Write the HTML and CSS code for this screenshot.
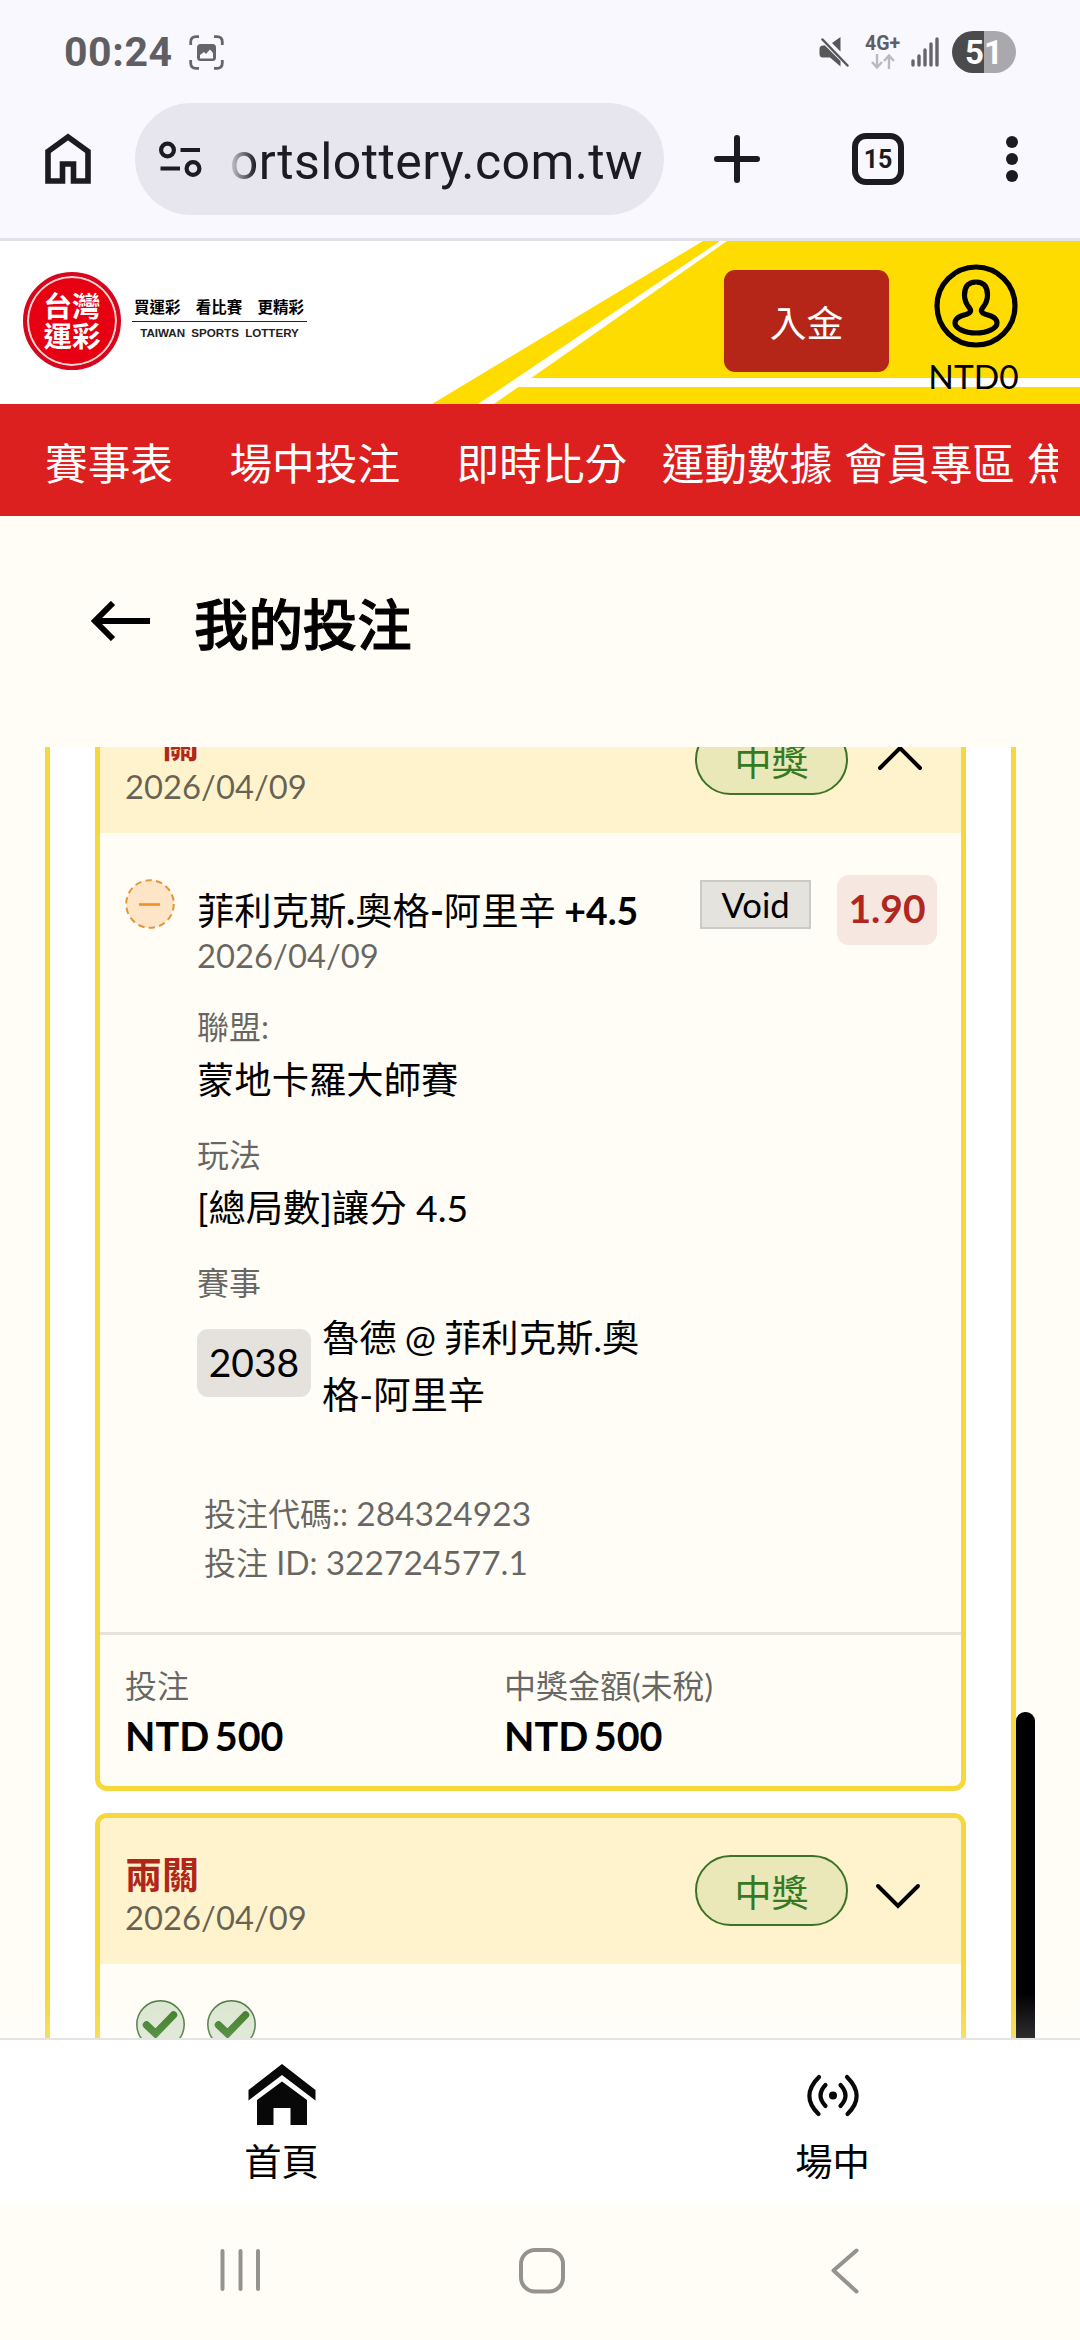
FILE: index.html
```html
<!DOCTYPE html>
<html lang="zh-Hant">
  <head>
    <meta charset="UTF-8" />
    <meta name="viewport" content="width=device-width, initial-scale=1.0" />
    <title>我的投注</title>
    <link rel="stylesheet" href="styles.css">
  </head>
  <body>
    <div class="status-bar">
      <span class="clock">00:24</span>
      <svg class="capture-icon" width="35" height="35" viewBox="0 0 35 35">
        <path d="M1.7 10V7Q1.7 1.7 7 1.7H10M25 1.7H28Q33.3 1.7 33.3 7V10M33.3 25V28Q33.3 33.3 28 33.3H25M10 33.3H7Q1.7 33.3 1.7 28V25" fill="none" stroke="#66666a" stroke-width="2.8" />
        <rect x="8" y="9" width="19" height="17" rx="3.5" fill="#66666a" />
        <path d="M11 20l4-3 2 2 4-4.500 3 3.500V23.500H11z" fill="#f9f8ff" />
      </svg>
      <svg class="mute-icon" width="30" height="32" viewBox="0 0 30 32">
        <path d="M0.500 13Q0.500 9.500 4 9.500H6L21.500 25V30.500L11 21.500H4Q0.500 21.500 0.500 18zM13 7L21.500 1V15.500z" fill="#58585b" />
        <path d="M3.500 3.500L28.500 29.500" stroke="#58585b" stroke-width="2.500" stroke-linecap="round" />
      </svg>
      <div class="network">
        <span>4G+</span>
        <svg width="24" height="15" viewBox="0 0 24 15">
          <path d="M6 0V13M1 8L6 13.500L11 8M18 15V2M13 7L18 1.500L23 7" fill="none" stroke="#b9b9be" stroke-width="2.400" />
        </svg>
      </div>
      <svg class="signal-icon" width="28" height="30" viewBox="0 0 28 30">
        <path d="M2 24V28M8 19V28M14 13V28M20 7V28M26 2V28" stroke="#66666a" stroke-width="3.400" stroke-linecap="round" />
      </svg>
      <div class="battery">51</div>
    </div>

    <div class="browser-bar">
      <svg class="home-icon" width="46" height="52" viewBox="0 0 46 52">
        <path d="M3 18.500L23 4L43 18.500V48H28.500V31H17.500V48H3z" fill="none" stroke="#1b1b21" stroke-width="5.600" />
      </svg>
      <div class="url-bar">
        <svg width="43" height="38" viewBox="0 0 43 38">
          <g fill="none" stroke="#1b1b21" stroke-width="4.200">
            <circle cx="8.500" cy="10" r="6.400" />
            <circle cx="34" cy="28.500" r="6.400" />
            <path d="M21.500 10H41M1.500 28.500H21" />
          </g>
        </svg>
        <div class="url-clip"><span class="url">portslottery.com.tw</span></div>
      </div>
      <svg class="plus-icon" width="46" height="48" viewBox="0 0 46 48">
        <path d="M23 3V45M3 24H43" stroke="#1b1b21" stroke-width="6" stroke-linecap="round" />
      </svg>
      <div class="tabs">15</div>
      <svg class="dots-icon" width="12" height="48" viewBox="0 0 12 48">
        <circle cx="6" cy="7" r="6" /><circle cx="6" cy="24" r="6" /><circle cx="6" cy="41" r="6" />
      </svg>
    </div>

    <header class="site-header">
      <svg class="header-bg" width="1080" height="163" viewBox="0 0 1080 163">
        <path d="M432 163L703 0H1080V163z" fill="#ffdc00" />
        <path d="M478 163L720 0H727L494 163zM520 137H1080V146H505z" fill="#fffefa" />
      </svg>
      <div class="logo"><span>台灣</span><span>運彩</span></div>
      <div class="slogan">
        <div class="slogan-zh"><span>買運彩</span><span>看比賽</span><span>更精彩</span></div>
        <div class="slogan-en">TAIWAN SPORTS LOTTERY</div>
      </div>
      <button class="deposit-btn">入金</button>
      <div class="account">
        <svg width="84" height="84" viewBox="0 0 84 84">
          <g fill="none" stroke="#000" stroke-width="5.200">
            <circle cx="42" cy="42" r="39" />
            <path d="M42 18C33 18 30.500 24 30.500 31C30.500 38 33 41 35.500 44C39 49 33 50 27 52C22 54 21 56 21 59C21 64 30 69 42 69C54 69 63 64 63 59C63 56 62 54 57 52C51 50 45 49 48.500 44C51 41 53.500 38 53.500 31C53.500 24 51 18 42 18z" />
          </g>
        </svg>
        <span class="balance">NTD0</span>
      </div>
    </header>

    <nav class="main-nav">
      <div class="main-nav-scroll">
        <a class="wide">賽事表</a>
        <a class="wide">場中投注</a>
        <a class="mid">即時比分</a>
        <a>運動數據</a>
        <a>會員專區</a>
        <a>焦點</a>
      </div>
    </nav>

    <div class="page-title">
      <svg width="60" height="40" viewBox="0 0 60 40">
        <path d="M59 20H4M22 2L4 20L22 38" fill="none" stroke="#000" stroke-width="6" />
      </svg>
      <h1>我的投注</h1>
    </div>

    <main class="bets">
      <div class="panel">
        <section class="card open">
          <div class="card-header">
            <div class="card-name">
              <h2>一關</h2>
              <span class="date">2026/04/09</span>
            </div>
            <span class="pill">中獎</span>
            <svg class="chevron up" width="46" height="26" viewBox="0 0 46 26">
              <path d="M3 23L23 3L43 23" fill="none" stroke="#000" stroke-width="4" stroke-linecap="round" />
            </svg>
          </div>

          <div class="selection">
            <svg class="void-icon" width="50" height="50" viewBox="0 0 50 50">
              <circle cx="25" cy="25" r="23.800" fill="#fee5c8" stroke="#e39639" stroke-width="2" stroke-dasharray="6.500 4.180" />
              <path d="M14 25.500H35" stroke="#f19020" stroke-width="2.600" />
            </svg>
            <div class="details">
              <h3>菲利克斯<b>.</b>奧格<b>-</b>阿里辛 <b>+4.5</b></h3>
              <span class="date">2026/04/09</span>
              <div class="label">聯盟:</div>
              <div class="value">蒙地卡羅大師賽</div>
              <div class="label">玩法</div>
              <div class="value">[總局數]讓分 4.5</div>
              <div class="label">賽事</div>
              <div class="match">
                <span class="match-no">2038</span>
                <span class="match-name">魯德 @ 菲利克斯.奧格-阿里辛</span>
              </div>
              <div class="codes">
                <div>投注代碼:: <span>284324923</span></div>
                <div>投注 ID: <span>322724577.1</span></div>
              </div>
            </div>
            <span class="void-tag">Void</span>
            <span class="odds">1.90</span>
          </div>

          <div class="totals">
            <div class="total">
              <span class="label">投注</span>
              <strong>NTD 500</strong>
            </div>
            <div class="total">
              <span class="label">中獎金額(未稅)</span>
              <strong>NTD 500</strong>
            </div>
          </div>
        </section>

        <section class="card">
          <div class="card-header">
            <div class="card-name">
              <h2>兩關</h2>
              <span class="date">2026/04/09</span>
            </div>
            <span class="pill">中獎</span>
            <svg class="chevron" width="46" height="26" viewBox="0 0 46 26">
              <path d="M3 3L23 23L43 3" fill="none" stroke="#000" stroke-width="4" stroke-linecap="round" />
            </svg>
          </div>
          <div class="results">
            <svg width="49" height="49" viewBox="0 0 49 49">
              <circle cx="24.500" cy="24.500" r="23.700" fill="#dae5cf" stroke="#47763d" stroke-width="1.600" />
              <path d="M10.500 25L19.500 33.500L37.500 15" fill="none" stroke="#37791f" stroke-width="7.500" stroke-linecap="round" />
            </svg>
            <svg width="49" height="49" viewBox="0 0 49 49">
              <circle cx="24.500" cy="24.500" r="23.700" fill="#dae5cf" stroke="#47763d" stroke-width="1.600" />
              <path d="M11.500 25L20.500 33.500L38.500 15" fill="none" stroke="#37791f" stroke-width="7.500" stroke-linecap="round" />
            </svg>
          </div>
        </section>
      </div>
      <div class="scrollbar"></div>
      <div class="fade"></div>
    </main>

    <footer class="bottom-nav">
      <a>
        <svg width="68" height="62" viewBox="0 0 68 62">
          <path d="M0.500 26L34 0L67.500 26V36.500L34 11L0.500 36.500z" fill="#080808" />
          <path d="M9 36L34 17.500L59 36V61H42.500V44H25.500V61H9z" fill="#080808" />
        </svg>
        <span>首頁</span>
      </a>
      <a>
        <svg width="52" height="62" viewBox="0 0 52 62">
          <g fill="none" stroke="#080808" stroke-width="4.200" stroke-linecap="round">
            <path d="M12 13Q-7 32 11.500 50M40 13Q59 32 40.500 50M18.500 21Q8.500 31.500 18.500 42M33.500 21Q43.500 31.500 33.500 42" />
          </g>
          <circle cx="26" cy="31.500" r="4" fill="#080808" />
        </svg>
        <span>場中</span>
      </a>
    </footer>

    <div class="system-nav">
      <svg width="40" height="44" viewBox="0 0 40 44">
        <path d="M2.500 3V41M20.500 3V41M38 3V41" stroke="#94938e" stroke-width="4" stroke-linecap="round" />
      </svg>
      <svg class="system-home" width="46" height="46" viewBox="0 0 46 46">
        <rect x="2" y="2" width="42" height="41.500" rx="14" fill="none" stroke="#94938e" stroke-width="4" />
      </svg>
      <svg width="28" height="46" viewBox="0 0 28 46">
        <path d="M25.500 2.500L2.500 22.500L25.500 43.500" fill="none" stroke="#94938e" stroke-width="4" stroke-linecap="round" stroke-linejoin="round" />
      </svg>
    </div>
  </body>
</html>
```

FILE: styles.css
```css
* {
  box-sizing: border-box;
}

body {
  margin: 0;
  width: 1080px;
  height: 2340px;
  overflow: hidden;
  display: flex;
  flex-direction: column;
  background-color: #fffdf6;
  color: #000;
  font-family: Lato, "Noto Sans CJK TC", sans-serif;
  font-size: 37.33px;
}

svg {
  display: block;
  flex: none;
}

h1,
h2,
h3 {
  margin: 0;
}

/* Phone status bar */
.status-bar {
  display: flex;
  flex: none;
  align-items: flex-start;
  height: 103px;
  padding: 31px 64px 0;
  background-color: #f9f8ff;
  font-family: Roboto, sans-serif;
  color: #5f5f63;
}

.clock {
  width: 125px;
  font-size: 41px;
  font-weight: 700;
  line-height: 42px;
  letter-spacing: 0.6px;
}

.capture-icon {
  margin-top: 4px;
}

.mute-icon {
  margin: 5px 16px 0 auto;
}

.network {
  display: flex;
  flex-direction: column;
  align-items: center;
  gap: 3px;
  width: 35px;
  padding-top: 5px;
  font-size: 19.5px;
  font-weight: 700;
  line-height: 15px;
}

.signal-icon {
  margin: 6px 13px 0 11px;
}

.battery {
  width: 64px;
  height: 42px;
  border-radius: 21px;
  background: linear-gradient(90deg, #4b4b4e 50%, #a9a8ad 50%);
  color: #fff;
  font-size: 33px;
  font-weight: 700;
  line-height: 43px;
  text-align: center;
}

/* Browser toolbar */
.browser-bar {
  display: flex;
  flex: none;
  align-items: center;
  height: 138px;
  padding: 0 62px 23px 45px;
  background-color: #f9f8ff;
  border-bottom: 3px solid #e2e1e9;
}

.url-bar {
  display: flex;
  align-items: center;
  width: 529px;
  height: 112px;
  margin-left: 44px;
  padding: 0 21px 0 24px;
  border-radius: 56px;
  background-color: #e7e5ee;
}

.url-clip {
  display: flex;
  flex: 1;
  justify-content: flex-end;
  margin-left: 24px;
  padding-top: 5px;
  overflow: hidden;
  -webkit-mask-image: linear-gradient(90deg, transparent, #000 30px);
  mask-image: linear-gradient(90deg, transparent, #000 30px);
}

.url {
  font-family: Roboto, sans-serif;
  font-size: 50px;
  line-height: 64px;
  letter-spacing: 0.4px;
  color: #1b1b21;
}

.plus-icon {
  margin-left: 50px;
}

.tabs {
  width: 52px;
  height: 52px;
  margin-left: 92px;
  border: 6px solid #1b1b21;
  border-radius: 14px;
  font-family: Roboto, sans-serif;
  font-size: 25px;
  font-weight: 700;
  line-height: 41px;
  text-align: center;
  color: #1b1b21;
}

.dots-icon {
  margin-left: auto;
  fill: #1b1b21;
}

/* Site header */
.site-header {
  position: relative;
  display: flex;
  flex: none;
  align-items: flex-start;
  height: 163px;
  padding: 0 54px 0 23px;
  background-color: #fff;
}

.header-bg {
  position: absolute;
  top: 0;
  left: 0;
}

.logo {
  display: flex;
  flex-direction: column;
  align-items: center;
  justify-content: center;
  width: 98px;
  height: 98px;
  margin-top: 31px;
  border: 4px solid #d7061f;
  border-radius: 50%;
  background-color: #e60012;
  box-shadow: inset 0 0 0 2px #fbd5d0;
  color: #fff;
  font-size: 28.5px;
  font-weight: 700;
  line-height: 30px;
}

.slogan {
  width: 175px;
  margin: 56px 0 0 11px;
  text-align: center;
}

.slogan-zh {
  display: flex;
  justify-content: space-between;
  height: 25px;
  padding: 0 3px 0 2px;
  border-bottom: 1px solid #222;
  font-size: 15.5px;
  font-weight: 700;
  line-height: 20px;
}

.slogan-en {
  color: #222;
  font-family: "Liberation Sans", Arial, sans-serif;
  font-size: 11.6px;
  font-weight: 700;
  line-height: 21px;
  word-spacing: 3px;
  white-space: nowrap;
}

.deposit-btn {
  position: relative;
  width: 165px;
  height: 102px;
  margin: 29px 37px 0 auto;
  padding: 0;
  border: none;
  border-radius: 11px;
  background-color: #b52518;
  color: #fff;
  font-family: inherit;
  font-size: 36.8px;
}

.account {
  position: relative;
  display: flex;
  flex-direction: column;
  align-items: center;
  width: 100px;
  padding-top: 23px;
  font-size: 33.5px;
  line-height: 57px;
}

.balance {
  margin-right: 5px;
}

/* Red menu */
.main-nav {
  flex: none;
  height: 112px;
  padding: 0 22px 0 45px;
  background-color: #dc1f1f;
}

.main-nav-scroll {
  display: flex;
  overflow: hidden;
  color: #fff;
  font-size: 42.67px;
  line-height: 119px;
  white-space: nowrap;
}

.main-nav a {
  flex: none;
  margin-right: 12px;
}

.main-nav .wide {
  margin-right: 56.5px;
}

.main-nav .mid {
  margin-right: 34.5px;
}

.page-title {
  display: flex;
  flex: none;
  align-items: center;
  gap: 43px;
  height: 231px;
  padding: 0 91px 22px;
}

.page-title h1 {
  padding-top: 1px;
  font-size: 54.4px;
  font-weight: 500;
  -webkit-text-stroke: 1px #000;
}

/* Scrolled list of bets */
.bets {
  position: relative;
  flex: none;
  height: 1291px;
  padding: 0 64px 0 45px;
  overflow: hidden;
}

.panel {
  height: 1400px;
  padding: 0 45px;
  border: 5px solid #f6d73e;
  border-width: 0 5px;
  background-color: #fff;
}

.card {
  height: 400px;
  border: 5px solid #f6d73e;
  border-radius: 12px;
  background-color: #fffdf6;
  overflow: hidden;
}

.card.open {
  height: 1109px;
  margin-bottom: 22px;
  transform: translateY(-65px);
}

.card.open + .card {
  transform: translateY(-65px);
}

.card-header {
  display: flex;
  align-items: center;
  height: 146px;
  padding: 0 40px 0 25px;
  background-color: #fef3cd;
}

.card-name {
  flex: 1;
  padding-top: 3px;
}

.card-name h2 {
  color: #b0271a;
  font-size: 37px;
  font-weight: 700;
  line-height: 50px;
}

.date {
  display: block;
  color: rgba(0, 0, 0, 0.6);
  font-size: 32.8px;
  line-height: 36px;
}

.pill {
  width: 153px;
  height: 71px;
  margin-bottom: 2px;
  border: 2px solid #3c7228;
  border-radius: 36px;
  background-color: #eae7b9;
  color: #337a22;
  font-size: 37px;
  line-height: 71px;
  text-align: center;
}

.chevron {
  margin: 9px 0 0 27px;
}

.chevron.up {
  margin: 0 -2px 5px 29px;
}

.selection {
  display: flex;
  align-items: flex-start;
  height: 802px;
  padding: 42px 24px 0 25px;
  border-bottom: 3px solid #e6e2dc;
}

.void-icon {
  margin-top: 4px;
}

.details {
  flex: 1;
  margin: 8px 0 0 22px;
}

.details h3 {
  font-size: 37.33px;
  font-weight: 400;
  line-height: 56px;
  word-spacing: -1px;
  white-space: nowrap;
}

.details .date {
  margin-bottom: 34px;
  line-height: 34px;
}

.details .label {
  margin-top: 27px;
}

.details .date + .label {
  margin-top: 0;
}

.label {
  color: rgba(0, 0, 0, 0.6);
  font-size: 32px;
  line-height: 40px;
}

.value {
  margin-top: 4px;
  line-height: 57px;
}

.match {
  display: flex;
  align-items: center;
  gap: 11px;
  margin-top: 6px;
}

.match-no {
  width: 114px;
  height: 68px;
  margin-bottom: 6px;
  border-radius: 11px;
  background-color: #e5e2dd;
  font-size: 39px;
  line-height: 67px;
  text-align: center;
}

.match-name {
  width: 330px;
  line-height: 57px;
  word-break: break-all;
  word-spacing: -1.5px;
}

.codes {
  margin: 66px 0 0 7px;
  color: rgba(0, 0, 0, 0.6);
  font-size: 32px;
  line-height: 49px;
}

.codes span {
  font-size: 33.5px;
}

.void-tag {
  width: 111px;
  height: 49px;
  margin-top: 5px;
  border: 2px solid #cccac5;
  background-color: #e5e3de;
  font-size: 34.67px;
  line-height: 46px;
  text-align: center;
}

.odds {
  width: 100px;
  height: 70px;
  margin-left: 26px;
  border-radius: 12px;
  background-color: #f6e7e0;
  color: #b0271f;
  font-size: 39px;
  font-weight: 700;
  line-height: 67px;
  text-align: center;
}

.totals {
  display: flex;
  padding: 31px 25px 0;
}

.total {
  display: flex;
  flex-direction: column;
  gap: 6px;
  width: 379px;
}

.total strong {
  font-size: 39.5px;
  line-height: 48px;
  word-spacing: -4px;
}

.results {
  display: flex;
  gap: 22px;
  padding: 36px;
}

.scrollbar {
  position: absolute;
  top: 965px;
  right: 45px;
  width: 19px;
  height: 400px;
  border-radius: 9px;
  background-color: #000;
}

.fade {
  position: absolute;
  left: 0;
  right: 0;
  bottom: 0;
  height: 45px;
  background: linear-gradient(rgba(255, 255, 255, 0), rgba(255, 255, 255, 0.18));
}

/* Bottom tabs */
.bottom-nav {
  display: flex;
  flex: none;
  height: 167px;
  padding: 24px 0 0 6px;
  border-top: 2px solid #e5e4e2;
  background-color: #fff;
  overflow: hidden;
}

.bottom-nav a {
  display: flex;
  flex: none;
  flex-direction: column;
  align-items: center;
  gap: 12px;
  width: 551px;
  font-size: 37.33px;
  line-height: 48px;
}

.system-nav {
  display: flex;
  flex: none;
  justify-content: space-between;
  height: 135px;
  padding: 43px 221px 0 220px;
  background-color: #fffdf6;
}

.system-home {
  margin-right: 8px;
}
```
